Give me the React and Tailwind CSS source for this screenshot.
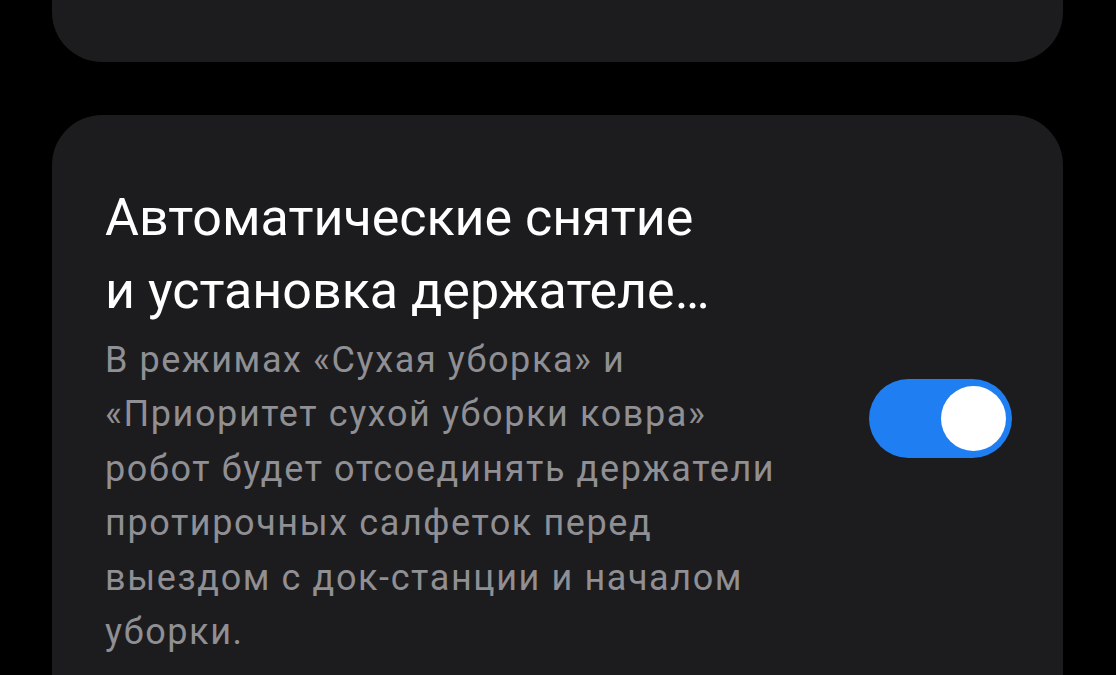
export default function App() {
  return (
    <div className="min-h-screen bg-black overflow-hidden" style={{ fontFamily: 'Roboto, "Noto Sans", sans-serif' }}>
      <div className="mx-[52px] w-[1011px]">
        <div className="h-[62px] rounded-b-[50px] bg-[#1c1c1e]" />
        <div className="mt-[53px] rounded-t-[50px] bg-[#1c1c1e] pt-[66px] pb-[40px] pl-[53px] pr-[51px] flex items-center">
          <div className="flex-1 min-w-0">
            <div className="text-[52px] leading-[73px] text-white">
              <div>Автоматические снятие</div>
              <div>и установка держателе…</div>
            </div>
            <div className="mt-[6px] text-[36px] leading-[54.4px] tracking-[1.6px] text-[#8f8f94]">
              <div>В режимах «Сухая уборка» и</div>
              <div>«Приоритет сухой уборки ковра»</div>
              <div>робот будет отсоединять держатели</div>
              <div>протирочных салфеток перед</div>
              <div>выездом с док-станции и началом</div>
              <div>уборки.</div>
            </div>
          </div>
          <div className="mb-[3px] w-[143px] h-[79px] rounded-full bg-[#1e7ef2] flex items-center justify-end pr-[6px] shrink-0">
            <div className="w-[65px] h-[65px] rounded-full bg-white" />
          </div>
        </div>
      </div>
    </div>
  )
}
